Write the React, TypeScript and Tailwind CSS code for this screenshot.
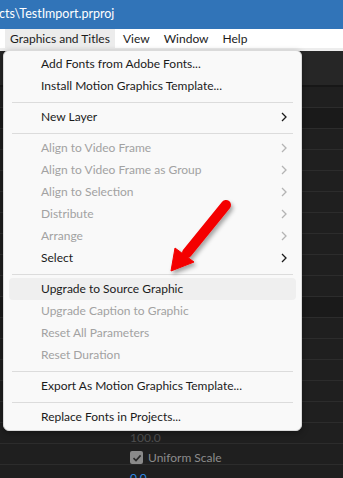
import React from 'react';

type Item =
  | { kind: 'item'; label: string; disabled?: boolean; sub?: boolean; hover?: boolean }
  | { kind: 'sep' };

const items: Item[] = [
  { kind: 'item', label: 'Add Fonts from Adobe Fonts...' },
  { kind: 'item', label: 'Install Motion Graphics Template...' },
  { kind: 'sep' },
  { kind: 'item', label: 'New Layer', sub: true },
  { kind: 'sep' },
  { kind: 'item', label: 'Align to Video Frame', disabled: true, sub: true },
  { kind: 'item', label: 'Align to Video Frame as Group', disabled: true, sub: true },
  { kind: 'item', label: 'Align to Selection', disabled: true, sub: true },
  { kind: 'item', label: 'Distribute', disabled: true, sub: true },
  { kind: 'item', label: 'Arrange', disabled: true, sub: true },
  { kind: 'item', label: 'Select', sub: true },
  { kind: 'sep' },
  { kind: 'item', label: 'Upgrade to Source Graphic', hover: true },
  { kind: 'item', label: 'Upgrade Caption to Graphic', disabled: true },
  { kind: 'item', label: 'Reset All Parameters', disabled: true },
  { kind: 'item', label: 'Reset Duration', disabled: true },
  { kind: 'sep' },
  { kind: 'item', label: 'Export As Motion Graphics Template...' },
  { kind: 'sep' },
  { kind: 'item', label: 'Replace Fonts in Projects...' },
];

// row heights of the dark panel behind the menu
const rows = [21, 21, 21, 21, 21, 21, 21, 21, 21, 21, 21, 21, 21, 21, 21, 21, 21, 21];
const darkRows = [1, 10];

const Chevron: React.FC<{ disabled?: boolean }> = ({ disabled }) => (
  <svg width="6" height="10" viewBox="0 0 6 10" className={disabled ? 'text-[#b4b4b4]' : 'text-[#1b1b1b]'}>
    <path d="M1 1 L5 5 L1 9" fill="none" stroke="currentColor" strokeWidth="1.3" />
  </svg>
);

const App: React.FC = () => {
  return (
    <div
      className="relative w-[343px] h-[478px] overflow-hidden bg-[#1f1f1f] flex flex-col"
      style={{ fontFamily: '"Segoe UI", Lato, "Noto Sans", sans-serif' }}
    >
      {/* Title bar */}
      <div className="h-[29px] shrink-0 bg-[#3174b8] flex items-center text-white text-[12.5px] pb-[1px]">
        <span className="-ml-[1px]">cts\TestImport.prproj</span>
      </div>

      {/* Menu bar */}
      <div className="h-[19px] shrink-0 bg-white flex items-center text-[12px] text-[#1b1b1b]">
        <div className="ml-[5px] h-full w-[110px] pl-[5px] bg-[#ececec] flex items-center">Graphics and Titles</div>
        <div className="ml-[8px]">View</div>
        <div className="ml-[14px]">Window</div>
        <div className="ml-[14px]">Help</div>
      </div>

      {/* Panel behind */}
      <div className="h-[3px] shrink-0 bg-[#ededed]" />
      <div className="h-[36px] shrink-0 bg-[#262626] border-b-2 border-[#171717]" />
      <div className="flex flex-col">
        {rows.map((h, i) => (
          <div
            key={i}
            className={`shrink-0 border-b border-[#2c2c2c] ${darkRows.includes(i) ? 'bg-[#1a1a1a]' : 'bg-[#1f1f1f]'}`}
            style={{ height: h }}
          />
        ))}
      </div>

      {/* Panel content peeking below the menu */}
      <div className="absolute left-[130px] top-[428px] flex flex-col text-[12px]">
        <div className="h-[19px] leading-[19px] text-[#4f4f4f]">100.0</div>
        <div className="h-[21px] flex items-center gap-[5px] text-[#8c8c8c]">
          <span className="w-[13px] h-[13px] rounded-[2px] bg-[#8a8a8a] flex items-center justify-center">
            <svg width="10" height="10" viewBox="0 0 10 10">
              <path d="M1.5 5.2 L4 7.6 L8.6 2.4" fill="none" stroke="#2a2a2a" strokeWidth="1.6" />
            </svg>
          </span>
          <span>Uniform Scale</span>
        </div>
        <div className="h-[19px] leading-[19px] text-[#2e8ae6]">0.0</div>
      </div>

      {/* Dropdown menu */}
      <div className="absolute left-[3px] top-[50px] w-[299px] rounded-[6px] bg-[#f9f9f9] border border-[#dadada] shadow-[0_2px_6px_rgba(0,0,0,0.35)] pt-[2px] pb-[2px] text-[12px]">
        {items.map((it, i) =>
          it.kind === 'sep' ? (
            <div key={i} className="h-[9px] mx-[8px] flex flex-col pt-[5px]">
              <div className="h-px bg-[#dcdcdc]" />
            </div>
          ) : (
            <div
              key={i}
              className={`h-[22px] mx-[5px] rounded-[4px] flex items-center justify-between pl-[32px] pr-[9px] ${
                it.hover ? 'bg-[#efefef]' : ''
              } ${it.disabled ? 'text-[#a2a2a2]' : 'text-[#1b1b1b]'}`}
            >
              <span>{it.label}</span>
              {it.sub && <Chevron disabled={it.disabled} />}
            </div>
          )
        )}
      </div>

      {/* Red annotation arrow */}
      <svg className="absolute left-0 top-0 pointer-events-none" width="343" height="478" viewBox="0 0 343 478">
        <defs>
          <filter id="sh" x="-50%" y="-50%" width="200%" height="200%">
            <feDropShadow dx="2" dy="3" stdDeviation="2" floodColor="#000" floodOpacity="0.35" />
          </filter>
        </defs>
        <g filter="url(#sh)" fill="#f40000" stroke="#f40000">
          <line x1="226" y1="205" x2="187" y2="253" strokeWidth="10" strokeLinecap="round" />
          <polygon points="171,271 175,248 194,262" strokeWidth="1" strokeLinejoin="round" />
        </g>
      </svg>
    </div>
  );
};

export default App;
